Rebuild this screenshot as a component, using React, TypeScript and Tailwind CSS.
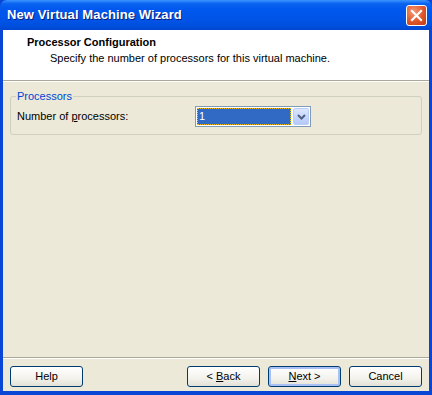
import React from "react";

const btn =
  "h-[21px] w-[73px] rounded-[3px] border border-[#003c74] bg-[linear-gradient(#ffffff,#f3f2ec_60%,#e3e1d6)] text-[11px] text-black flex items-center justify-center";

export default function App() {
  return (
    <div
      className="w-[432px] h-[395px] flex flex-col bg-[#0a46d6] overflow-hidden"
      style={{ fontFamily: '"Liberation Sans", Arial, sans-serif' }}
    >
      {/* Title bar */}
      <div className="h-[30px] flex items-center justify-between pl-[7px] pr-[5px] rounded-t-[7px] bg-[linear-gradient(#3d95ff_0%,#0a64f0_12%,#0058ee_30%,#0055e8_60%,#0050e0_85%,#0046d0_100%)]">
        <span className="text-white font-bold text-[13px] [text-shadow:1px_1px_0_#0a1e7a] tracking-[0.1px]">
          New Virtual Machine Wizard
        </span>
        <div className="w-[21px] h-[21px] mt-[1px] rounded-[3px] border border-white bg-[radial-gradient(circle_at_35%_30%,#f29a78,#e0562a_55%,#c23a14)] flex items-center justify-center">
          <svg width="13" height="13" viewBox="0 0 13 13">
            <path d="M2 2 L11 11 M11 2 L2 11" stroke="white" strokeWidth="2.2" strokeLinecap="square" />
          </svg>
        </div>
      </div>

      {/* Body */}
      <div className="flex-1 mx-[3px] mb-[4px] flex flex-col bg-[#ece9d8]">
        {/* Header */}
        <div className="h-[51px] bg-white flex flex-col pl-[24px] pt-[6px] border-b border-[#aca899]">
          <div className="text-[11px] font-bold text-black leading-[13px]">Processor Configuration</div>
          <div className="text-[11px] text-black leading-[13px] mt-[3px] pl-[23px]">
            Specify the number of processors for this virtual machine.
          </div>
        </div>
        <div className="h-px bg-white" />

        {/* Content */}
        <div className="flex-1 px-[7px] pt-[8px]">
          <fieldset className="border border-[#d0d0bf] rounded-[3px] h-[45px] px-[6px] pt-0">
            <legend className="text-[11px] text-[#0046d5] px-[1px] ml-[-1px] leading-[13px]">Processors</legend>
            <div className="flex items-center mt-[3px]">
              <span className="text-[11px] text-black w-[178px]">
                Number of <span className="underline">p</span>rocessors:
              </span>
              <div className="w-[116px] h-[21px] border border-[#7f9db9] bg-white flex items-center p-[1px]">
                <div className="flex-1 h-full bg-[#316ac5] border border-dotted border-[#f5c000] flex items-center pl-[1px]">
                  <span className="text-[11px] text-white leading-none">1</span>
                </div>
                <div className="w-[16px] h-full ml-[2px] rounded-[2px] bg-[linear-gradient(#dce6fe,#b4c9f9)] border border-[#bccdf7] flex items-center justify-center">
                  <svg width="9" height="6" viewBox="0 0 9 6">
                    <path d="M1 1 L4.5 4.5 L8 1" stroke="#4d6185" strokeWidth="2" fill="none" />
                  </svg>
                </div>
              </div>
            </div>
          </fieldset>
        </div>

        {/* Footer */}
        <div className="border-t border-[#aca899]">
          <div className="h-px bg-white" />
          <div className="h-[32px] flex items-start pt-[7px] px-[7px]">
            <button className={btn}>Help</button>
            <div className="flex-1" />
            <button className={btn}>
              &lt; <span className="underline ml-[3px]">B</span>ack
            </button>
            <button className={btn + " ml-[8px] shadow-[inset_0_0_0_2px_#a9c1f2]"}>
              <span className="underline">N</span>ext &gt;
            </button>
            <button className={btn + " ml-[8px]"}>Cancel</button>
          </div>
        </div>
      </div>
    </div>
  );
}
